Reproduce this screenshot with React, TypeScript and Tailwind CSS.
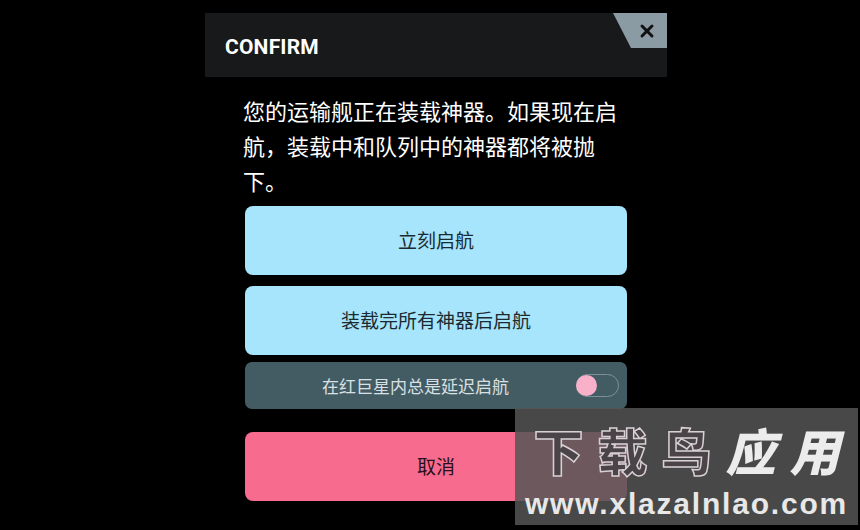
import { X } from 'lucide-react';

const cjk = "font-['Noto_Sans_CJK_SC','Noto_Sans',sans-serif]";

function ActionButton({ label }: { label: string }) {
  return (
    <button className="h-[69px] w-full rounded-[8px] bg-[#a6e5fc] text-[19px] text-[#1b2a31]">
      {label}
    </button>
  );
}

function DelayToggle() {
  return (
    <div className="flex h-[47px] w-full items-center rounded-[7px] bg-[#435c64] pl-[10px] pr-[8px]">
      <span className="flex-1 text-center text-[17px] text-[#d9e0e3]">在红巨星内总是延迟启航</span>
      <span className="relative h-[23px] w-[43px] rounded-full border border-[#7d9098]">
        <span className="absolute left-[-1px] top-[0px] h-[21px] w-[21px] rounded-full bg-[#f9b1c9]" />
      </span>
    </div>
  );
}

function Watermark() {
  return (
    <div className="absolute left-[515px] top-[408px] flex h-[117px] w-[343px] flex-col items-center justify-center bg-[#555555]/85">
      <div className="flex pl-[14px] text-[50px] font-black leading-[73px] tracking-[14px]">
        <span className="text-[#4a4448] [-webkit-text-stroke:1.5px_#d8d0d4]">下载鸟</span>
        <span className="italic text-[#ececec]">应用</span>
      </div>
      <div className="font-['Liberation_Sans',sans-serif] text-[30px] font-bold leading-[35px] tracking-[1.8px] text-[#e8e8e8]">
        www.xlazalnlao.com
      </div>
    </div>
  );
}

export default function App() {
  return (
    <div className={`relative h-[530px] w-[860px] overflow-hidden bg-black ${cjk}`}>
      <div className="ml-[205px] pt-[13px] w-[462px]">
        <header className="relative flex h-[64px] items-center bg-[#18191b] pl-[20px] pt-[5px]">
          <h1 className="font-['Roboto',sans-serif] text-[21px] font-bold tracking-[0.2px] text-white">CONFIRM</h1>
          <div className="absolute right-0 top-0 flex h-[35px] w-[54px] items-center justify-end pr-[10px] bg-[#8b9ba4] [clip-path:polygon(0_0,100%_0,100%_100%,18px_100%)]">
            <X size={20} strokeWidth={3.5} className="text-[#111]" />
          </div>
        </header>

        <div className="flex flex-col px-[40px]">
          <p className="ml-[-2px] mt-[16px] pr-[6px] text-[22px] leading-[35px] text-white">
            您的运输舰正在装载神器。如果现在启航，装载中和队列中的神器都将被抛下。
          </p>
          <div className="mt-[8px] flex flex-col">
            <ActionButton label="立刻启航" />
            <div className="mt-[11px]">
              <ActionButton label="装载完所有神器后启航" />
            </div>
            <div className="mt-[7px]">
              <DelayToggle />
            </div>
            <button className="mt-[23px] h-[69px] w-full rounded-[8px] bg-[#f76b8e] text-[19px] text-[#2a1018]">
              取消
            </button>
          </div>
        </div>
      </div>
      <Watermark />
    </div>
  );
}
